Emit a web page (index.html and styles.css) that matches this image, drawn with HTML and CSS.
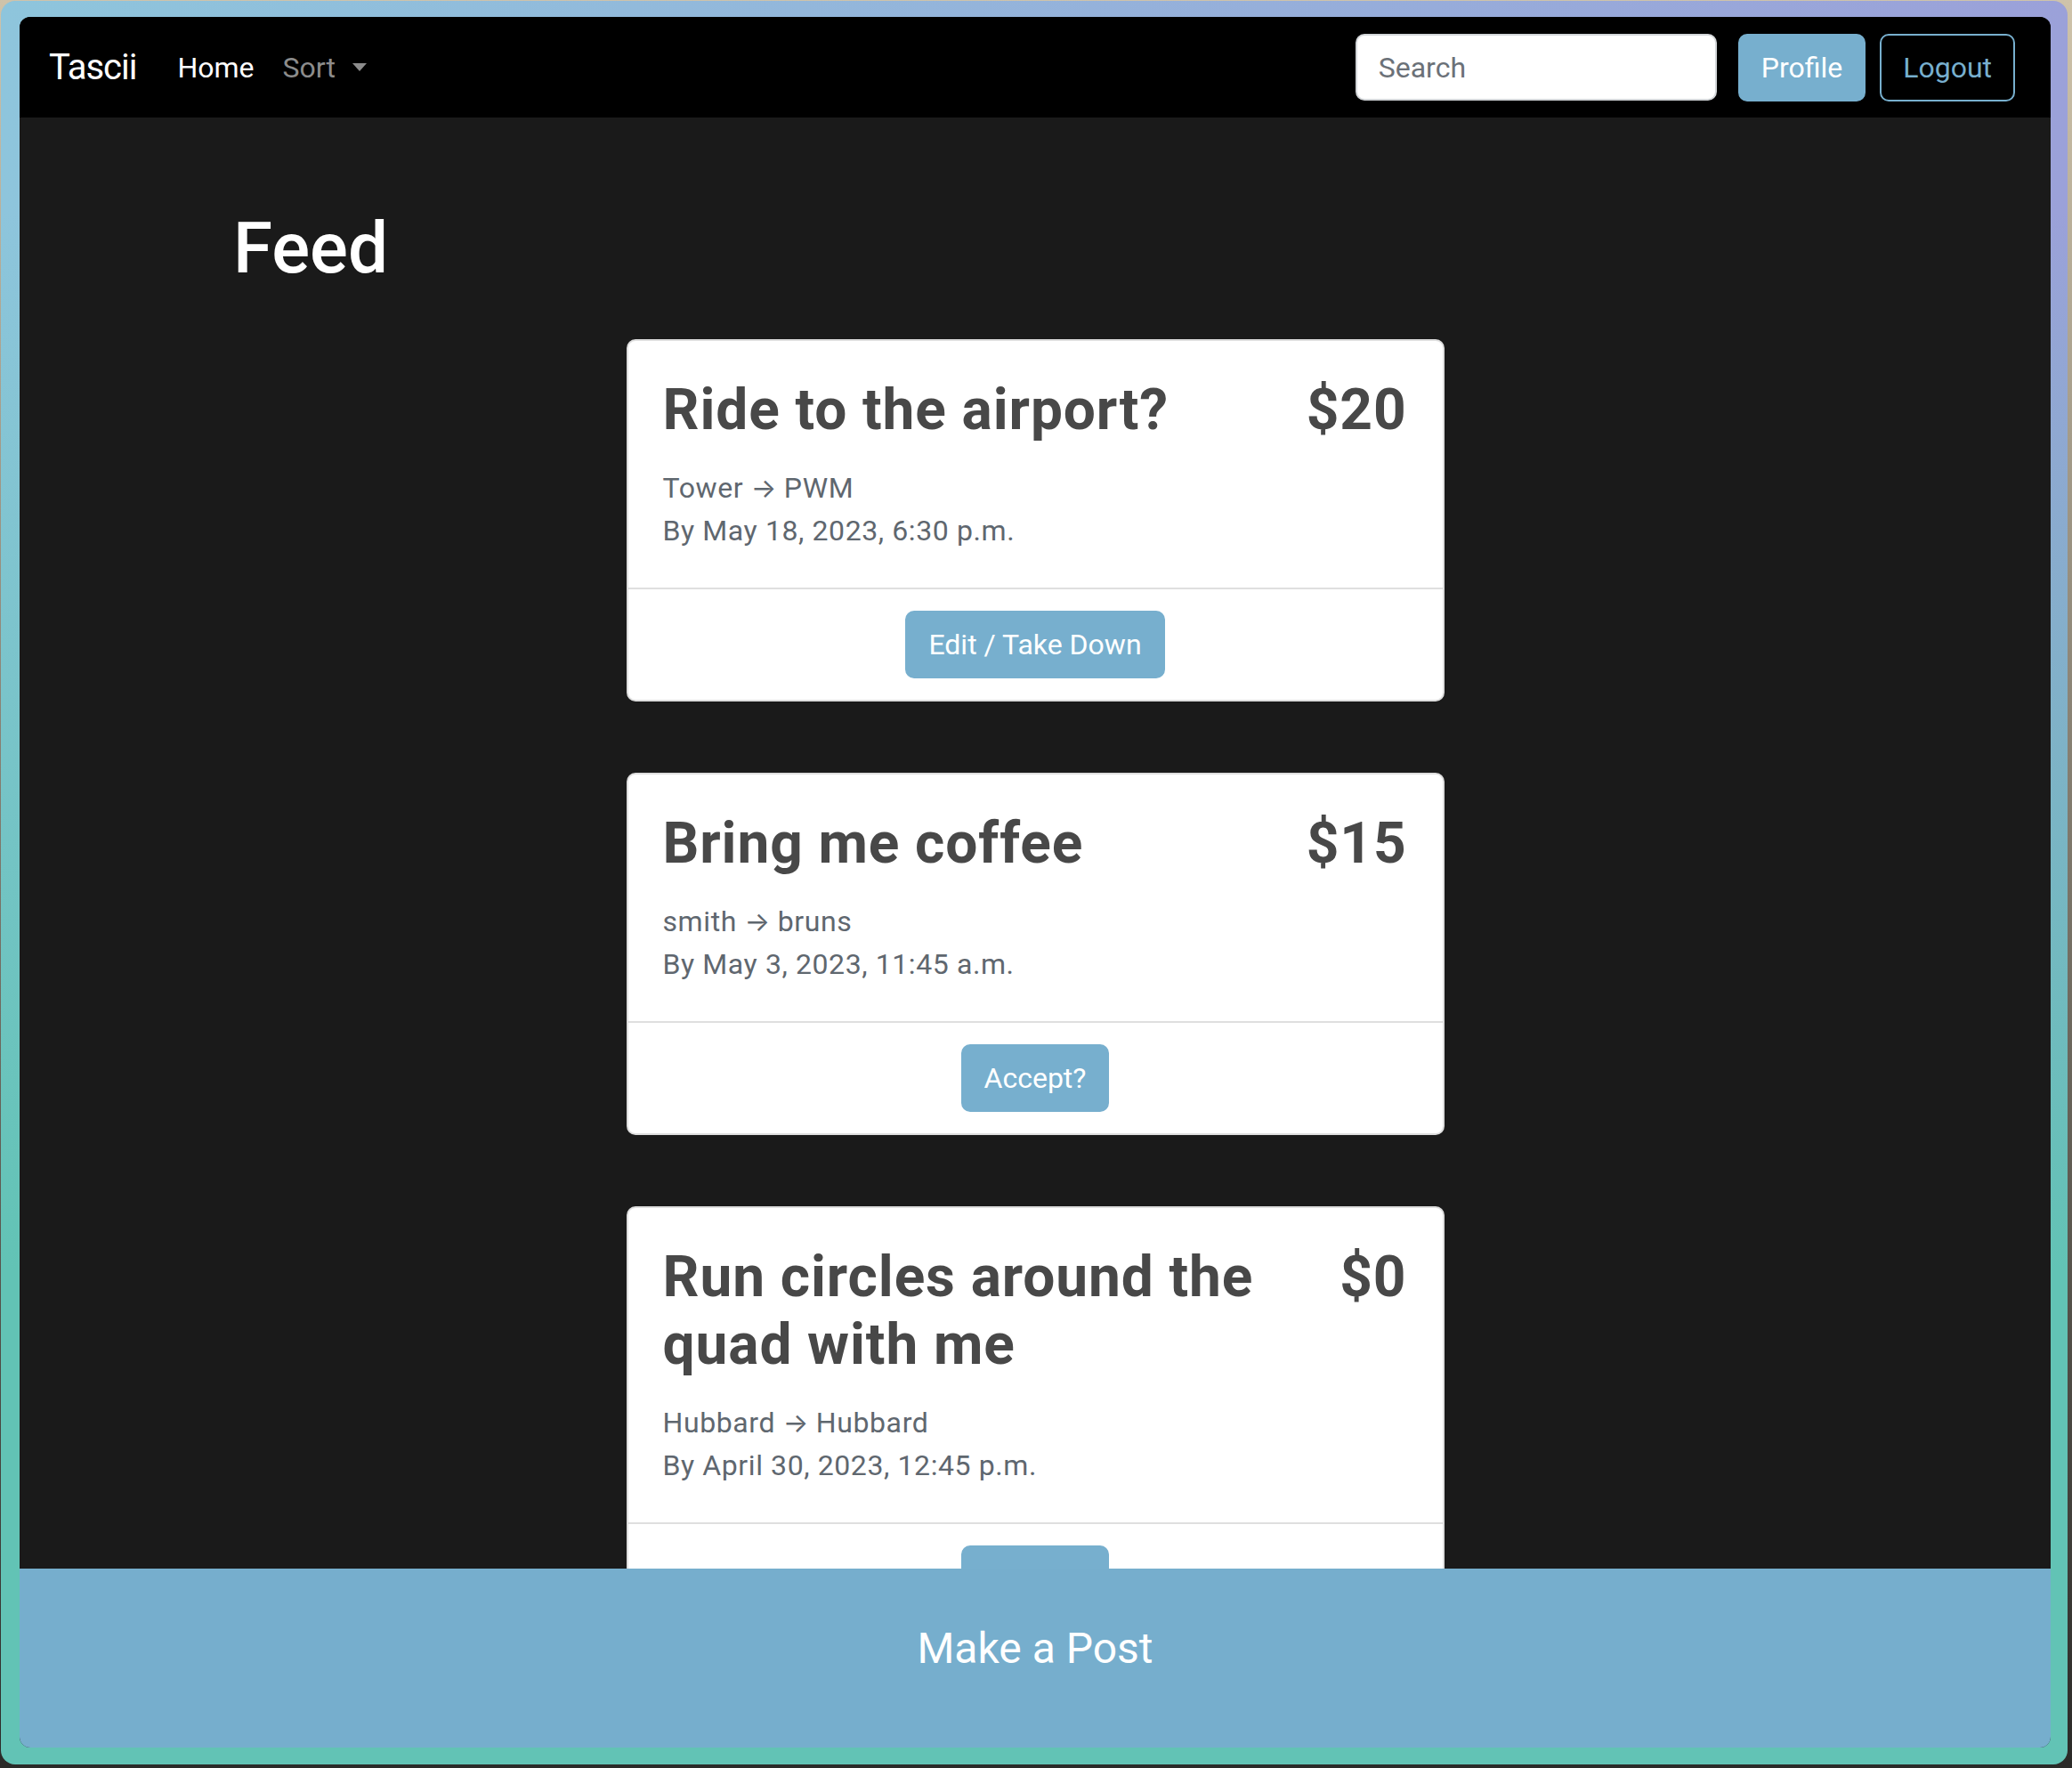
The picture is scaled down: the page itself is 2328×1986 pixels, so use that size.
FILE: index.html
```html
<!DOCTYPE html>
<html lang="en">
<head>
<meta charset="utf-8">
<title>Tascii - Feed</title>
<link rel="stylesheet" href="styles.css">
</head>
<body>
<div class="frame">
  <div class="window">
    <nav class="navbar">
      <a class="brand">Tascii</a>
      <ul class="nav-links">
        <li class="nav-link">Home</li>
        <li class="nav-link nav-link-muted">Sort<span class="caret"></span></li>
      </ul>
      <form class="nav-search">
        <input class="search-input" type="text" placeholder="Search">
        <button class="btn btn-primary" type="button">Profile</button>
        <button class="btn btn-outline" type="button">Logout</button>
      </form>
    </nav>
    <main class="feed">
      <h1 class="feed-title">Feed</h1>
      <div class="card-list">
        <div class="card">
          <div class="card-body">
            <div class="card-head">
              <h2 class="card-title">Ride to the airport?</h2>
              <div class="card-price">$20</div>
            </div>
            <p class="card-meta">Tower <span class="arrow">→</span> PWM</p>
            <p class="card-meta">By May 18, 2023, 6:30 p.m.</p>
          </div>
          <div class="card-footer">
            <button class="btn btn-primary" type="button">Edit / Take Down</button>
          </div>
        </div>
        <div class="card">
          <div class="card-body">
            <div class="card-head">
              <h2 class="card-title">Bring me coffee</h2>
              <div class="card-price">$15</div>
            </div>
            <p class="card-meta">smith <span class="arrow">→</span> bruns</p>
            <p class="card-meta">By May 3, 2023, 11:45 a.m.</p>
          </div>
          <div class="card-footer">
            <button class="btn btn-primary" type="button">Accept?</button>
          </div>
        </div>
        <div class="card">
          <div class="card-body">
            <div class="card-head">
              <h2 class="card-title">Run circles around the quad with me</h2>
              <div class="card-price">$0</div>
            </div>
            <p class="card-meta">Hubbard <span class="arrow">→</span> Hubbard</p>
            <p class="card-meta">By April 30, 2023, 12:45 p.m.</p>
          </div>
          <div class="card-footer">
            <button class="btn btn-primary" type="button">Accept?</button>
          </div>
        </div>
      </div>
    </main>
    <div class="post-bar">Make a Post</div>
  </div>
</div>
</body>
</html>
```

FILE: styles.css
```css
html, body {
  margin: 0;
}

body {
  width: 2328px;
  height: 1986px;
  box-sizing: border-box;
  padding: 1px;
  overflow: hidden;
  background: linear-gradient(to bottom, #cfc3aa 0%, #8a8375 40%, #2b2a28 100%);
  font-family: Roboto, "Liberation Sans", "DejaVu Sans", sans-serif;
}

.frame {
  box-sizing: border-box;
  width: 2322px;
  height: 1981px;
  padding: 18px 19px 19px 21px;
  border-radius: 16px;
  background:
    linear-gradient(to bottom, rgba(98, 195, 181, 0) 12%, #62c3b5 72%),
    linear-gradient(to right, #8ec5dc, #9ba1d9);
}

.window {
  height: 100%;
  display: flex;
  flex-direction: column;
  border-radius: 12px;
  overflow: hidden;
  background: #1a1a1a;
}

/* Navbar */
.navbar {
  flex: 0 0 113px;
  box-sizing: border-box;
  display: flex;
  align-items: center;
  padding: 0 40px 0 33px;
  background: #000;
}

.brand {
  font-size: 40px;
  line-height: 60px;
  letter-spacing: -1px;
  color: #fff;
  margin-right: 30px;
}

.nav-links {
  display: flex;
  list-style: none;
  margin: 0;
  padding: 0;
}

.nav-link {
  display: flex;
  align-items: center;
  font-size: 32px;
  line-height: 48px;
  padding: 0 16px;
  color: #fff;
}

.nav-link-muted {
  color: #8c8c8c;
}

.caret {
  width: 0;
  height: 0;
  margin-left: 19px;
  border-left: 8px solid transparent;
  border-right: 8px solid transparent;
  border-top: 9px solid currentColor;
}

.nav-search {
  margin: 0 0 0 auto;
  display: flex;
  align-items: center;
}

.search-input {
  box-sizing: border-box;
  width: 406px;
  height: 75px;
  margin-right: 24px;
  padding: 0 24px;
  border: 2px solid #d3d6d9;
  border-radius: 10px;
  background: #fff;
  font-family: inherit;
  font-size: 32px;
  color: #212529;
}

.search-input::placeholder {
  color: #6b7178;
}

.btn {
  box-sizing: border-box;
  height: 76px;
  padding: 12px 24px;
  border: 2px solid #77afce;
  border-radius: 10px;
  font-family: inherit;
  font-size: 32px;
  line-height: 48px;
  cursor: pointer;
}

.btn-primary {
  background: #77afce;
  color: #fff;
}

.nav-search .btn-primary {
  margin-right: 16px;
}

.btn-outline {
  background: transparent;
  color: #77afce;
}

/* Feed */
.feed {
  flex: 1 1 auto;
  min-height: 0;
  overflow: hidden;
  padding-top: 99px;
}

.feed-title {
  margin: 0 0 54px 240px;
  font-size: 80px;
  font-weight: 500;
  line-height: 1.2;
  color: #fff;
}

.card-list {
  display: flex;
  flex-direction: column;
  align-items: center;
  gap: 80px;
}

.card {
  box-sizing: border-box;
  flex-shrink: 0;
  width: 919px;
  background: #fff;
  border: 2px solid #dedede;
  border-radius: 10px;
}

.card-body {
  padding: 40px 40px 40px 39px;
}

.card-head {
  display: flex;
  justify-content: space-between;
  align-items: flex-start;
  gap: 24px;
  margin-bottom: 24px;
}

.card-title,
.card-price {
  margin: 0;
  font-size: 64px;
  font-weight: 700;
  line-height: 1.2;
  letter-spacing: 0.9px;
  color: #484848;
}

.card-price {
  flex-shrink: 0;
}

.card-meta {
  margin: 0;
  font-size: 32px;
  line-height: 48px;
  letter-spacing: 0.6px;
  color: #5f676f;
}

.arrow {
  font-family: Inter, "DejaVu Sans", sans-serif;
  font-size: 30px;
  letter-spacing: 0;
}

.card-footer {
  display: flex;
  justify-content: center;
  padding: 24px;
  border-top: 2px solid #dfdfdf;
}

/* Bottom bar */
.post-bar {
  flex: 0 0 201px;
  box-sizing: border-box;
  display: flex;
  align-items: center;
  justify-content: center;
  padding-bottom: 22px;
  background: #76aecd;
  color: #fff;
  font-size: 48px;
}
```
